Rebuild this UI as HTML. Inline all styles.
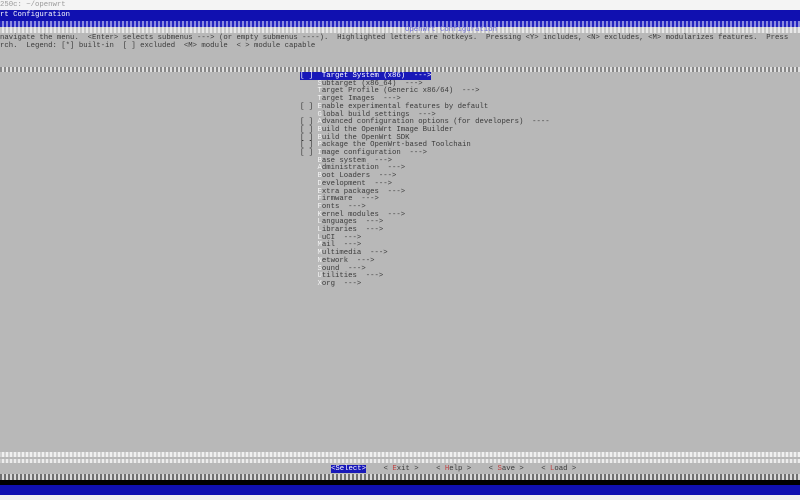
<!DOCTYPE html>
<html><head><style>
body{margin:0;width:800px;height:500px;overflow:hidden;background:#b8b8b8;position:relative;font-family:"Liberation Mono",monospace;font-size:7.3px;color:#3a3a3a}
.a{position:absolute;white-space:pre;line-height:8px}
.b{position:absolute;left:0;width:800px}
.h{color:#f4f4f4}
.sel{background:#1818b8;color:#fff}
</style></head><body>
<div class="b" style="top:0;height:10px;background:#f4f4f4"></div>
<div class="a" style="top:1px;left:0;color:#999">250c: ~/openwrt</div>
<div class="b" style="top:10px;height:11px;background:#1010b0"></div>
<div class="a" style="top:11px;left:0;color:#fff">rt Configuration</div>
<div class="b" style="top:21px;height:6px;background:repeating-linear-gradient(90deg,#2424c0 0 2px,#8a8ae0 2px 4px)"></div>
<div class="b" style="top:27px;height:6px;background:repeating-linear-gradient(90deg,#c8c8c8 0 2px,#e8e8e8 2px 4px)"></div>
<div class="a" style="top:26px;left:405px;color:#6a6ad8">OpenWrt Configuration</div>
<div class="a" style="top:34px;left:0">navigate the menu.  &lt;Enter&gt; selects submenus ---&gt; (or empty submenus ----).  Highlighted letters are hotkeys.  Pressing &lt;Y&gt; includes, &lt;N&gt; excludes, &lt;M&gt; modularizes features.  Press
rch.  Legend: [*] built-in  [ ] excluded  &lt;M&gt; module  &lt; &gt; module capable</div>
<div class="b" style="top:67px;height:5px;background:repeating-linear-gradient(90deg,#888 0 2px,#e0e0e0 2px 4px)"></div>
<div class="a" style="top:73px;left:300px;line-height:7.7px"><span class="sel">[ ]  Target System (x86)  ---&gt;</span>
    <span class="h">S</span>ubtarget (x86_64)  ---&gt;
    <span class="h">T</span>arget Profile (Generic x86/64)  ---&gt;
    <span class="h">T</span>arget Images  ---&gt;
[ ] <span class="h">E</span>nable experimental features by default
    <span class="h">G</span>lobal build settings  ---&gt;
[ ] <span class="h">A</span>dvanced configuration options (for developers)  ----
[ ] <span class="h">B</span>uild the OpenWrt Image Builder
[ ] <span class="h">B</span>uild the OpenWrt SDK
[ ] <span class="h">P</span>ackage the OpenWrt-based Toolchain
[ ] <span class="h">I</span>mage configuration  ---&gt;
    <span class="h">B</span>ase system  ---&gt;
    <span class="h">A</span>dministration  ---&gt;
    <span class="h">B</span>oot Loaders  ---&gt;
    <span class="h">D</span>evelopment  ---&gt;
    <span class="h">E</span>xtra packages  ---&gt;
    <span class="h">F</span>irmware  ---&gt;
    <span class="h">F</span>onts  ---&gt;
    <span class="h">K</span>ernel modules  ---&gt;
    <span class="h">L</span>anguages  ---&gt;
    <span class="h">L</span>ibraries  ---&gt;
    <span class="h">L</span>uCI  ---&gt;
    <span class="h">M</span>ail  ---&gt;
    <span class="h">M</span>ultimedia  ---&gt;
    <span class="h">N</span>etwork  ---&gt;
    <span class="h">S</span>ound  ---&gt;
    <span class="h">U</span>tilities  ---&gt;
    <span class="h">X</span>org  ---&gt;</div>
<div class="b" style="top:452px;height:5px;background:repeating-linear-gradient(90deg,#d0d0d0 0 2px,#f0f0f0 2px 4px)"></div>
<div class="b" style="top:459px;height:4px;background:repeating-linear-gradient(90deg,#c8c8c8 0 2px,#ececec 2px 4px)"></div>
<div class="a" style="top:465px;left:331px"><span class="sel">&lt;Select&gt;</span>    &lt; <span style="color:#c04040">E</span>xit &gt;    &lt; <span style="color:#c04040">H</span>elp &gt;    &lt; <span style="color:#c04040">S</span>ave &gt;    &lt; <span style="color:#c04040">L</span>oad &gt;</div>
<div class="b" style="top:474px;height:6px;background:repeating-linear-gradient(90deg,#707070 0 2px,#d8d8d8 2px 4px)"></div>
<div class="b" style="top:480px;height:5px;background:#000"></div>
<div class="b" style="top:485px;height:10px;background:#1010b0"></div>
<div class="b" style="top:495px;height:5px;background:#f0f0f0"></div>
</body></html>
